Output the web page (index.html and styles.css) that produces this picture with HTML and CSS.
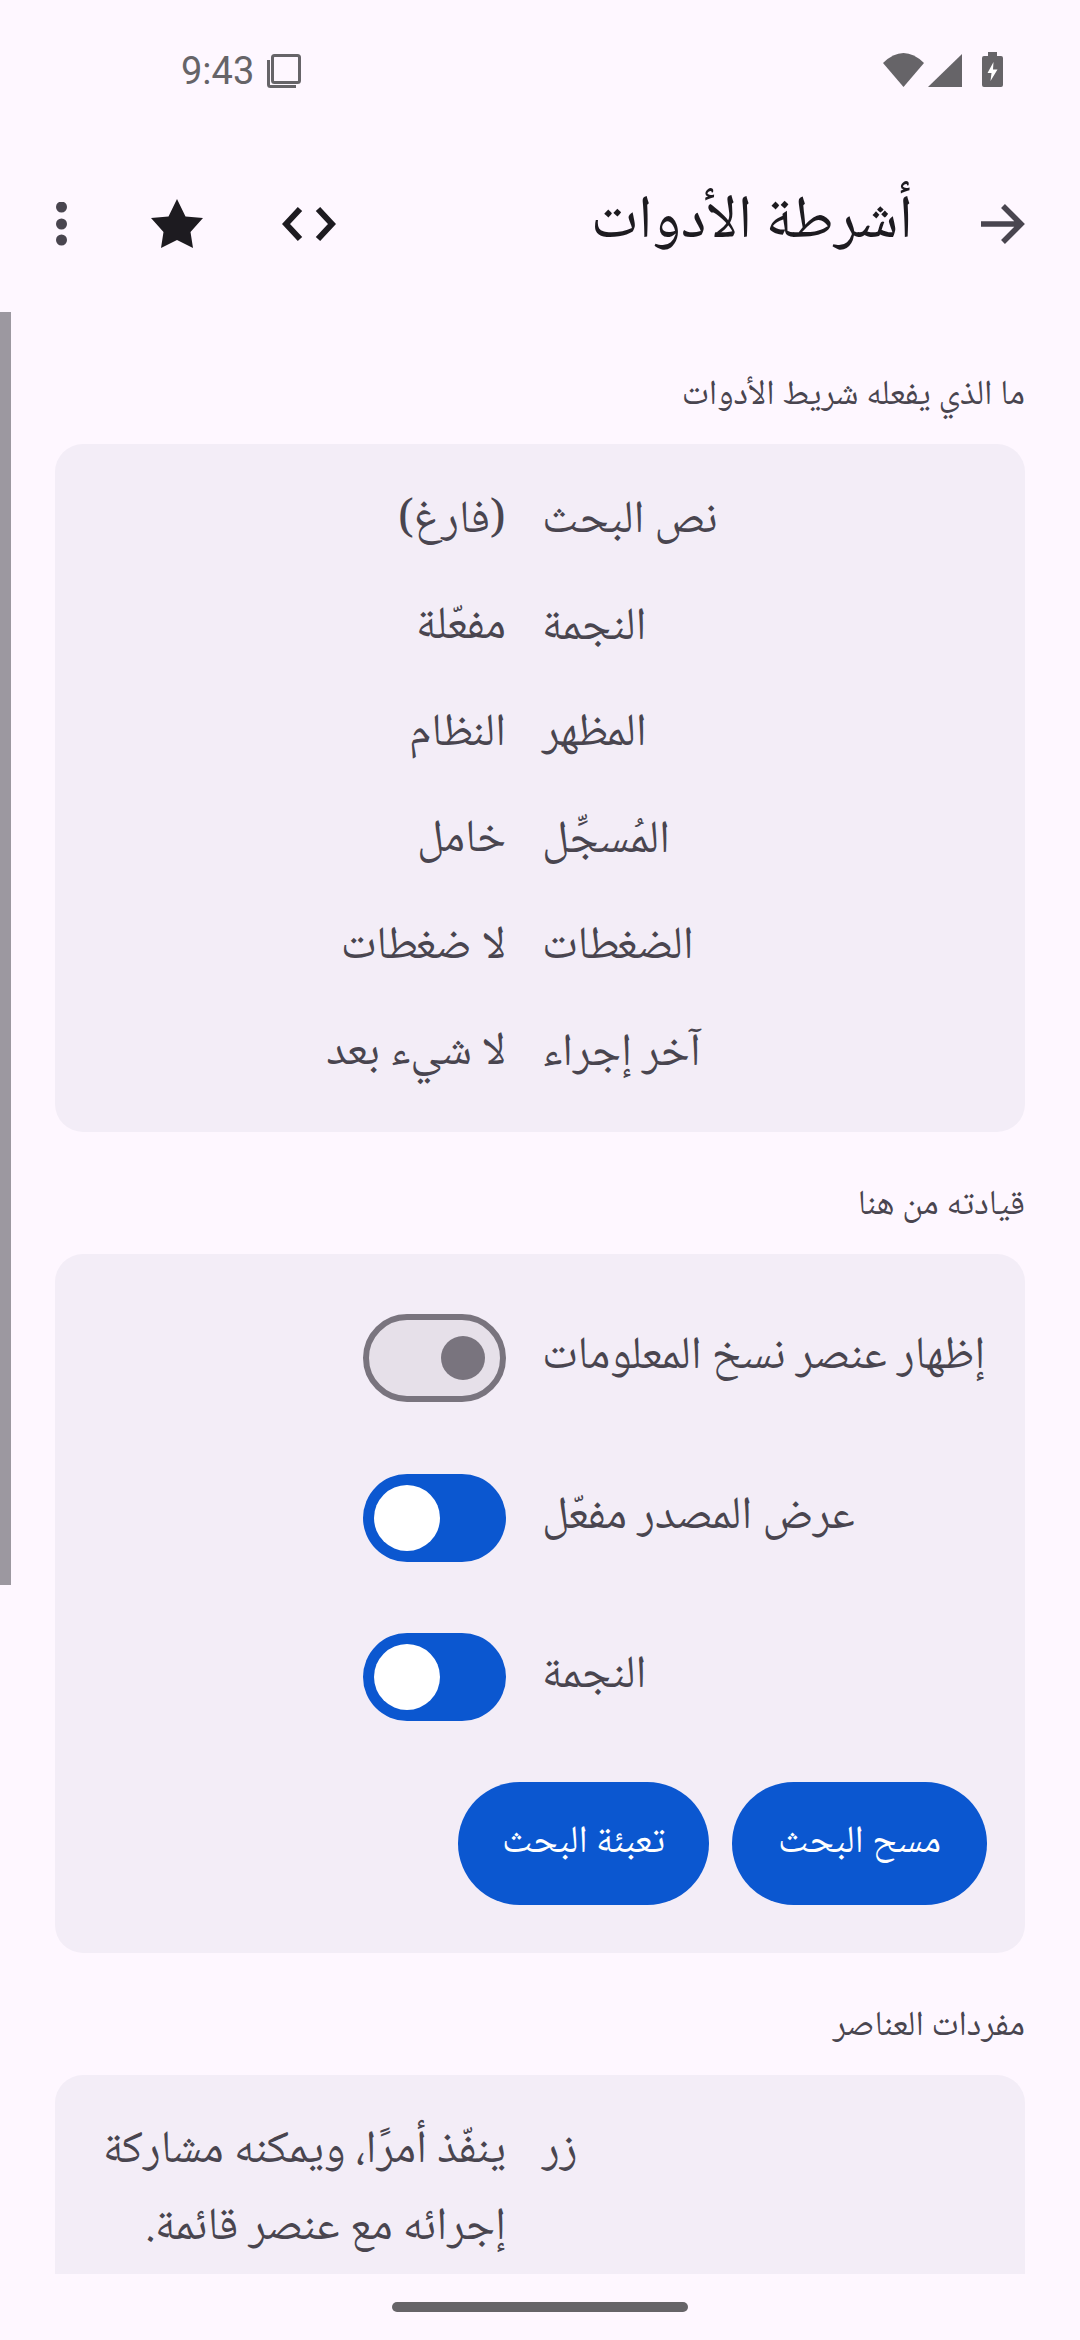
FILE: index.html
```html
<!DOCTYPE html>
<html lang="ar">
<head>
<meta charset="utf-8">
<title>أشرطة الأدوات</title>
<link rel="stylesheet" href="styles.css">
</head>
<body>
<div class="phone">
  <header class="status">
    <div class="status-left">
      <span class="time">9:43</span>
      <svg class="ic-copy" viewBox="0 0 34 34" width="34" height="34"><rect x="5.500" y="1.500" width="27" height="27" rx="2" fill="none" stroke="#666468" stroke-width="3"/><path d="M1.500 6v24.500a2 2 0 0 0 2 2H29" fill="none" stroke="#666468" stroke-width="3"/></svg>
    </div>
    <div class="status-right">
      <svg class="ic-wifi" viewBox="0 0 41 34" width="41" height="34"><path d="M0 10Q20.500-10 41 10L20.500 34z" fill="#666468"/></svg>
      <svg class="ic-signal" viewBox="0 0 34 33" width="34" height="33"><path d="M34 0v33H0z" fill="#666468"/></svg>
      <svg class="ic-bat" viewBox="0 0 21 35" width="21" height="35"><path d="M6 0h9v4h4a2 2 0 0 1 2 2v27a2 2 0 0 1-2 2H2a2 2 0 0 1-2-2V6a2 2 0 0 1 2-2h4z" fill="#666468"/><path d="M11.500 10l-6 11h4l-1 8 7-11.500H11z" fill="#fff"/></svg>
    </div>
  </header>

  <nav class="toolbar">
    <div class="tools">
      <svg class="ic-dots" viewBox="0 0 12 44" width="12" height="44"><circle cx="6.500" cy="5" r="5.500" fill="#49454f"/><circle cx="6.500" cy="22" r="5.500" fill="#49454f"/><circle cx="6.500" cy="38" r="5.500" fill="#49454f"/></svg>
      <svg class="ic-star" viewBox="0 0 52 50" width="52" height="50"><path d="M26 0l8.500 17.500L52 19 39.500 33 42 49l-16-8-16 8 2.500-16L0 19l17.500-1.500z" fill="#1d1b20"/></svg>
      <svg class="ic-code" viewBox="0 0 54 36" width="54" height="36"><path d="M18 3L4 18l14 15M36 3l14 15-14 15" fill="none" stroke="#1d1b20" stroke-width="6"/></svg>
    </div>
    <h1 class="title" dir="rtl">أشرطة الأدوات</h1>
    <svg class="ic-back" viewBox="0 0 45 44" width="45" height="44"><path d="M1 22h41M23 4l18 18-18 18" fill="none" stroke="#49454f" stroke-width="5.500"/></svg>
  </nav>

  <main class="content">
    <div class="scrollbar"></div>

    <h2 class="section" dir="rtl">ما الذي يفعله شريط الأدوات</h2>
    <section class="card card-facts">
      <div class="row"><div class="val" dir="rtl">(فارغ)</div><div class="lab" dir="rtl">نص البحث</div></div>
      <div class="row"><div class="val" dir="rtl">مفعّلة</div><div class="lab" dir="rtl">النجمة</div></div>
      <div class="row"><div class="val" dir="rtl">النظام</div><div class="lab" dir="rtl">المظهر</div></div>
      <div class="row"><div class="val" dir="rtl">خامل</div><div class="lab" dir="rtl">المُسجِّل</div></div>
      <div class="row"><div class="val" dir="rtl">لا ضغطات</div><div class="lab" dir="rtl">الضغطات</div></div>
      <div class="row"><div class="val" dir="rtl">لا شيء بعد</div><div class="lab" dir="rtl">آخر إجراء</div></div>
    </section>

    <h2 class="section" dir="rtl">قيادته من هنا</h2>
    <section class="card card-controls">
      <div class="switch-row"><div class="val-switch"><span class="switch off"><span class="thumb"></span></span></div><div class="lab" dir="rtl">إظهار عنصر نسخ المعلومات</div></div>
      <div class="switch-row"><div class="val-switch"><span class="switch on"><span class="thumb"></span></span></div><div class="lab" dir="rtl">عرض المصدر مفعّل</div></div>
      <div class="switch-row"><div class="val-switch"><span class="switch on"><span class="thumb"></span></span></div><div class="lab" dir="rtl">النجمة</div></div>
      <div class="buttons">
        <button class="btn fill" dir="rtl">تعبئة البحث</button>
        <button class="btn clear" dir="rtl">مسح البحث</button>
      </div>
    </section>

    <h2 class="section" dir="rtl">مفردات العناصر</h2>
    <section class="card card-vocab">
      <div class="row-text"><div class="val" dir="rtl">ينفّذ أمرًا، ويمكنه مشاركة إجرائه مع عنصر قائمة.</div><div class="lab" dir="rtl">زر</div></div>
    </section>
  </main>

  <footer class="navbar"><span class="pill"></span></footer>
</div>
</body>
</html>
```
FILE: styles.css
```css
* { box-sizing: border-box; }
html, body { margin: 0; padding: 0; }
body { background: #fef7ff; font-family: "Noto Naskh Arabic", "Noto Sans", Roboto, sans-serif; }
.phone { width: 1080px; height: 2340px; display: flex; flex-direction: column; overflow: hidden; background: #fef7ff; }

.status { height: 108px; flex: none; display: flex; justify-content: space-between; align-items: flex-start; padding: 52px 77px 0 181px; }
.status-left { display: flex; align-items: flex-start; gap: 13px; margin-top: 2px; }
.time { font: 38px/34px Roboto, sans-serif; color: #666468; }
.status-right { display: flex; align-items: flex-start; }
.ic-wifi { margin: 1px 0 0 0; }
.ic-signal { margin: 2px 0 0 4px; }
.ic-bat { margin-left: 20px; }

.toolbar { height: 192px; flex: none; display: flex; align-items: center; padding: 40px 55px 0; }
.tools { display: flex; align-items: center; flex: 1; }
.ic-star { margin-left: 84px; }
.ic-code { margin-left: 79px; }
.title { margin: 0 67px 0 0; font-size: 61px; font-weight: 400; line-height: 80px; color: #1d1b20; }

.content { flex: 1; min-height: 0; position: relative; overflow: hidden; padding: 22px 55px 0; }
.scrollbar { position: absolute; left: 0; top: 12px; width: 11px; height: 1273px; background: #9c98a0; }
.section { margin: 0; height: 122px; padding-top: 53px; font-size: 35px; font-weight: 400; line-height: 44px; color: #49454f; text-align: right; }
.card { background: #f3edf7; border-radius: 28px; padding: 25px 38px 0; }
.val { flex: 1; min-width: 0; text-align: right; font-size: 46px; line-height: 77px; color: #49454f; }
.val-switch { flex: 1; min-width: 0; display: flex; justify-content: flex-end; }
.lab { width: 445px; flex: none; text-align: left; font-size: 46px; line-height: 60px; color: #49454f; }
.row, .switch-row, .row-text { display: flex; gap: 36px; align-items: center; }
.row { height: 106.500px; }
.card-facts { height: 688px; }
.card-controls { height: 699px; padding-top: 60px; }
.switch-row { height: 88px; margin-bottom: 71.500px; }
.switch { display: flex; align-items: center; width: 143px; height: 88px; border-radius: 44px; }
.switch.on { background: #0b57d0; justify-content: flex-start; }
.switch.off { background: #e6e0e9; border: 6px solid #79747e; justify-content: flex-end; }
.thumb { border-radius: 50%; display: block; }
.on .thumb { width: 66px; height: 66px; background: #fff; margin-left: 11px; }
.off .thumb { width: 44px; height: 44px; background: #79747e; margin-right: 15px; }
.buttons { display: flex; justify-content: flex-end; gap: 23px; margin-top: -11px; }
.btn { height: 123px; border: 0; border-radius: 62px; background: #0b57d0; color: #fff; font: inherit; font-size: 38.500px; padding: 0 46px; }
.btn.fill { padding: 0 44px; }
.card-vocab { height: 400px; padding-top: 39px; }
.row-text { align-items: flex-start; }
.row-text .lab { line-height: 77px; }

.navbar { height: 66px; flex: none; padding-top: 28px; display: flex; justify-content: center; }
.pill { display: block; width: 296px; height: 10px; border-radius: 5px; background: #666468; }
```
